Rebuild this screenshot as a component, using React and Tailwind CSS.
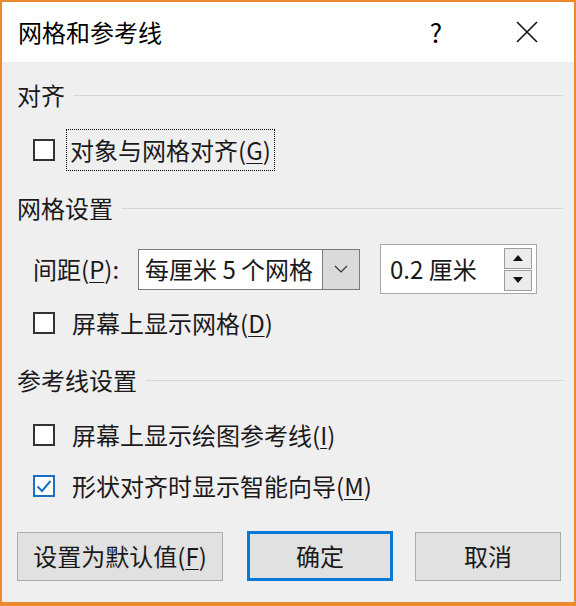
import React from "react";

const font = { fontFamily: '"Noto Sans CJK SC", "Noto Sans", sans-serif' };

function U({ children }) {
  return <span className="underline underline-offset-[3px] decoration-1">{children}</span>;
}

function Box({ checked }) {
  return (
    <div
      className={
        "w-[22px] h-[22px] shrink-0 bg-white border-2 flex items-center justify-center " +
        (checked ? "border-[#1a6fc4]" : "border-[#333333]")
      }
    >
      {checked && (
        <svg width="16" height="14" viewBox="0 0 16 14">
          <path d="M1.5 7.5 L6 12 L14.5 2" fill="none" stroke="#1a6fc4" strokeWidth="2" />
        </svg>
      )}
    </div>
  );
}

function Header({ children, mt }) {
  return (
    <div className={"flex items-center h-[30px] pl-[15px] pr-[11px] " + mt}>
      <span className="text-[24px] leading-[30px] text-[#1a1a1a] whitespace-nowrap">{children}</span>
      <div className="flex-1 h-px bg-[#d6d4d6] ml-[9px]"></div>
    </div>
  );
}

function CheckRow({ checked, children, mt }) {
  return (
    <div className={"flex items-center h-[30px] pl-[31px] " + mt}>
      <Box checked={checked} />
      <span className="ml-[17px] text-[24px] leading-[30px] text-[#1a1a1a] whitespace-nowrap">{children}</span>
    </div>
  );
}

export default function App() {
  return (
    <div
      style={font}
      className="w-[576px] h-[606px] border-[#ec8a2e] border-t-2 border-l-2 border-r-2 border-b-[4px] flex flex-col bg-[#f0eff0] text-[#1a1a1a]"
    >
      {/* Title bar */}
      <div className="h-[60px] bg-white flex items-center shrink-0">
        <span className="ml-[16px] text-[24px] leading-none text-black">网格和参考线</span>
        <div className="flex-1"></div>
        <span className="text-[26px] leading-none text-black mr-[74px]">?</span>
        <svg width="22" height="22" viewBox="0 0 22 22" className="mr-[36px]">
          <path d="M1 1 L21 21 M21 1 L1 21" stroke="#111" strokeWidth="1.6" fill="none" />
        </svg>
      </div>

      {/* Body */}
      <div className="flex flex-col flex-1">
        <Header mt="mt-[18px]">对齐</Header>

        <div className="flex items-center h-[42px] pl-[31px] mt-[19px]">
          <Box />
          <div className="ml-[11px] h-[42px] border border-dotted border-black flex items-center px-[3px]">
            <span className="text-[24px] leading-[30px] whitespace-nowrap">
              对象与网格对齐(<U>G</U>)
            </span>
          </div>
        </div>

        <Header mt="mt-[22px]">网格设置</Header>

        <div className="flex items-center h-[50px] mt-[21px] pl-[31px]">
          <span className="w-[105px] text-[24px] leading-[30px] whitespace-nowrap">
            间距(<U>P</U>):
          </span>
          <div className="w-[222px] h-[41px] border border-[#7a7a7a] bg-white flex">
            <div className="flex-1 flex items-center pl-[6px] overflow-hidden">
              <span className="text-[24px] leading-[30px] whitespace-nowrap">每厘米 5 个网格</span>
            </div>
            <div className="w-[37px] bg-[#dadada] border-l border-[#7a7a7a] flex items-center justify-center">
              <svg width="14" height="8" viewBox="0 0 14 8">
                <path d="M1 1 L7 7 L13 1" stroke="#333" strokeWidth="1.2" fill="none" />
              </svg>
            </div>
          </div>
          <div className="ml-[20px] w-[157px] h-[50px] border border-[#a8a8a8] bg-white flex items-center">
            <span className="flex-1 pl-[9px] text-[24px] leading-[30px] whitespace-nowrap">0.2 厘米</span>
            <div className="flex flex-col mr-[4px] gap-px">
              <div className="w-[28px] h-[21px] border border-[#9c9c9c] bg-[#ececec] flex items-center justify-center">
                <svg width="10" height="6" viewBox="0 0 10 6">
                  <path d="M0 6 L5 0 L10 6 Z" fill="#111" />
                </svg>
              </div>
              <div className="w-[28px] h-[21px] border border-[#9c9c9c] bg-[#ececec] flex items-center justify-center">
                <svg width="10" height="6" viewBox="0 0 10 6">
                  <path d="M0 0 L5 6 L10 0 Z" fill="#111" />
                </svg>
              </div>
            </div>
          </div>
        </div>

        <CheckRow mt="mt-[14px]">
          屏幕上显示网格(<U>D</U>)
        </CheckRow>

        <Header mt="mt-[27px]">参考线设置</Header>

        <CheckRow mt="mt-[25px]">
          屏幕上显示绘图参考线(<U>I</U>)
        </CheckRow>
        <CheckRow checked mt="mt-[21px]">
          形状对齐时显示智能向导(<U>M</U>)
        </CheckRow>

        <div className="flex items-center mt-[30px] pl-[15px]">
          <div className="w-[206px] h-[49px] bg-[#e1e1e1] border border-[#adadad] flex items-center justify-center">
            <span className="text-[24px] leading-[30px] whitespace-nowrap">
              设置为默认值(<U>F</U>)
            </span>
          </div>
          <div className="ml-[24px] w-[146px] h-[50px] bg-[#e1e1e1] border-[3px] border-[#0a78d7] flex items-center justify-center">
            <span className="text-[24px] leading-[30px]">确定</span>
          </div>
          <div className="ml-[22px] w-[146px] h-[49px] bg-[#e1e1e1] border border-[#adadad] flex items-center justify-center">
            <span className="text-[24px] leading-[30px]">取消</span>
          </div>
        </div>
      </div>
    </div>
  );
}
